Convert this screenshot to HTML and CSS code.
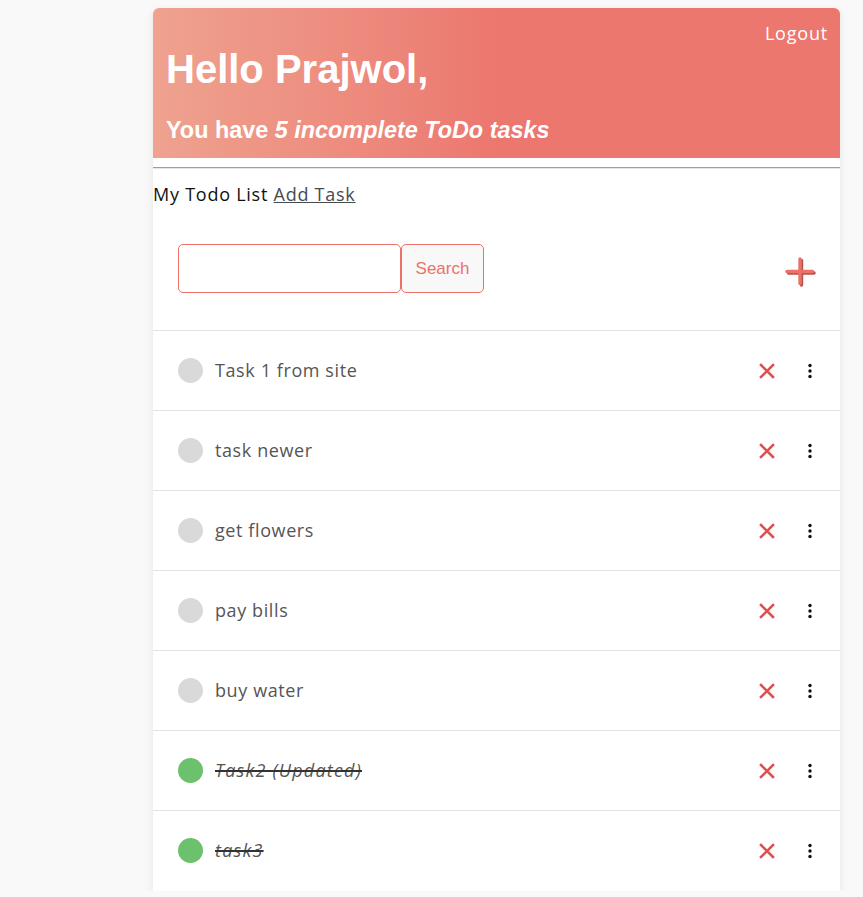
FILE: index.html
```html
<!DOCTYPE html>
<html lang="en">
<head>
<meta charset="utf-8">
<title>Todo</title>
<link rel="stylesheet" href="styles.css">
</head>
<body>
<div class="card">
  <header class="hero">
    <div class="hero-top"><a class="logout" href="#">Logout</a></div>
    <h1 class="hello">Hello Prajwol,</h1>
    <h2 class="summary">You have <em>5 incomplete ToDo tasks</em></h2>
  </header>
  <hr class="rule">
  <div class="crumbs">My Todo List <a href="#" class="add-link">Add Task</a></div>
  <div class="toolbar">
    <form class="search">
      <input class="search-input" type="text">
      <button class="search-btn" type="button">Search</button>
    </form>
    <button class="plus" type="button" aria-label="Add">
      <svg width="32" height="32" viewBox="0 0 32 32">
        <g stroke="#b5524c" stroke-width="3.4" stroke-linecap="round">
          <line x1="17.5" y1="4.5" x2="17.5" y2="29"/>
          <line x1="4.5" y1="17" x2="30" y2="17"/>
        </g>
        <g stroke="#ec7168" stroke-width="3.4" stroke-linecap="round">
          <line x1="16" y1="3" x2="16" y2="27.5"/>
          <line x1="3" y1="15.5" x2="28.5" y2="15.5"/>
        </g>
      </svg>
    </button>
  </div>
  <ul class="tasks">
    <li class="task"><span class="dot"></span><span class="label">Task 1 from site</span><span class="actions"><svg class="del" width="16" height="16" viewBox="0 0 16 16"><path d="M2 2L14 14M14 2L2 14" stroke="#d9534f" stroke-width="2.6" stroke-linecap="square"/></svg><svg class="more" width="4" height="16" viewBox="0 0 4 16"><circle cx="2" cy="2.5" r="1.7"/><circle cx="2" cy="8" r="1.7"/><circle cx="2" cy="13.5" r="1.7"/></svg></span></li>
    <li class="task"><span class="dot"></span><span class="label">task newer</span><span class="actions"><svg class="del" width="16" height="16" viewBox="0 0 16 16"><path d="M2 2L14 14M14 2L2 14" stroke="#d9534f" stroke-width="2.6" stroke-linecap="square"/></svg><svg class="more" width="4" height="16" viewBox="0 0 4 16"><circle cx="2" cy="2.5" r="1.7"/><circle cx="2" cy="8" r="1.7"/><circle cx="2" cy="13.5" r="1.7"/></svg></span></li>
    <li class="task"><span class="dot"></span><span class="label">get flowers</span><span class="actions"><svg class="del" width="16" height="16" viewBox="0 0 16 16"><path d="M2 2L14 14M14 2L2 14" stroke="#d9534f" stroke-width="2.6" stroke-linecap="square"/></svg><svg class="more" width="4" height="16" viewBox="0 0 4 16"><circle cx="2" cy="2.5" r="1.7"/><circle cx="2" cy="8" r="1.7"/><circle cx="2" cy="13.5" r="1.7"/></svg></span></li>
    <li class="task"><span class="dot"></span><span class="label">pay bills</span><span class="actions"><svg class="del" width="16" height="16" viewBox="0 0 16 16"><path d="M2 2L14 14M14 2L2 14" stroke="#d9534f" stroke-width="2.6" stroke-linecap="square"/></svg><svg class="more" width="4" height="16" viewBox="0 0 4 16"><circle cx="2" cy="2.5" r="1.7"/><circle cx="2" cy="8" r="1.7"/><circle cx="2" cy="13.5" r="1.7"/></svg></span></li>
    <li class="task"><span class="dot"></span><span class="label">buy water</span><span class="actions"><svg class="del" width="16" height="16" viewBox="0 0 16 16"><path d="M2 2L14 14M14 2L2 14" stroke="#d9534f" stroke-width="2.6" stroke-linecap="square"/></svg><svg class="more" width="4" height="16" viewBox="0 0 4 16"><circle cx="2" cy="2.5" r="1.7"/><circle cx="2" cy="8" r="1.7"/><circle cx="2" cy="13.5" r="1.7"/></svg></span></li>
    <li class="task done"><span class="dot"></span><span class="label">Task2 (Updated)</span><span class="actions"><svg class="del" width="16" height="16" viewBox="0 0 16 16"><path d="M2 2L14 14M14 2L2 14" stroke="#d9534f" stroke-width="2.6" stroke-linecap="square"/></svg><svg class="more" width="4" height="16" viewBox="0 0 4 16"><circle cx="2" cy="2.5" r="1.7"/><circle cx="2" cy="8" r="1.7"/><circle cx="2" cy="13.5" r="1.7"/></svg></span></li>
    <li class="task done"><span class="dot"></span><span class="label">task3</span><span class="actions"><svg class="del" width="16" height="16" viewBox="0 0 16 16"><path d="M2 2L14 14M14 2L2 14" stroke="#d9534f" stroke-width="2.6" stroke-linecap="square"/></svg><svg class="more" width="4" height="16" viewBox="0 0 4 16"><circle cx="2" cy="2.5" r="1.7"/><circle cx="2" cy="8" r="1.7"/><circle cx="2" cy="13.5" r="1.7"/></svg></span></li>
  </ul>
</div>
</body>
</html>
```
FILE: styles.css
```css
html, body {
  margin: 0;
  padding: 0;
}
body {
  background: #f9f9f9;
  padding: 8px 23px 0 153px;
  font-family: "Open Sans", "Liberation Sans", sans-serif;
  color: #212529;
}
.card {
  width: 687px;
  background: #fff;
  border-radius: 6px 6px 0 0;
  box-shadow: 0 3px 10px rgba(0, 0, 0, 0.09);
  padding-bottom: 1px;
}
.hero {
  height: 150px;
  box-sizing: border-box;
  padding: 12px 12px 0 13px;
  border-radius: 6px 6px 0 0;
  background: linear-gradient(to right, #efa28f 0%, #ed8a7d 30%, #ec776f 50%, #ec776f 100%);
  color: #fff;
  font-family: "Liberation Sans", Arial, sans-serif;
}
.hero-top {
  display: flex;
  justify-content: flex-end;
  height: 26px;
}
.logout {
  color: #fff;
  text-decoration: none;
  font-family: "Open Sans", sans-serif;
  font-size: 18px;
  letter-spacing: 0.8px;
  line-height: 26px;
}
.hello {
  margin: 0 0 0;
  font-size: 40px;
  line-height: 46px;
  font-weight: bold;
}
.summary {
  margin: 24px 0 0;
  font-size: 23.4px;
  line-height: 28px;
  font-weight: bold;
}
.summary em {
  font-style: italic;
}
.rule {
  margin: 9px 0 0;
  border: 0;
  border-top: 1px solid #9e9e9e;
  border-bottom: 1px solid #e6e6e6;
  height: 0;
}
.crumbs {
  margin-top: 13px;
  font-size: 18px;
  line-height: 25px;
  letter-spacing: 0.75px;
  color: #111;
}
.add-link {
  color: #454b52;
  text-decoration: underline;
}
.toolbar {
  display: flex;
  align-items: center;
  justify-content: space-between;
  padding: 37px 24px 37px 25px;
}
.search {
  display: flex;
  margin: 0;
}
.search-input {
  width: 223px;
  height: 49px;
  box-sizing: border-box;
  border: 1px solid #ec7168;
  border-radius: 5px;
  background: #fff;
  margin: 0;
}
.search-btn {
  width: 83px;
  height: 49px;
  box-sizing: border-box;
  border: 1px solid #ec7168;
  border-radius: 5px;
  background: #f8f8f8;
  color: #ec7168;
  font-family: "Liberation Sans", Arial, sans-serif;
  font-size: 17px;
  padding: 0;
  margin: 0;
}
.plus {
  border: 0;
  background: none;
  padding: 0;
  width: 32px;
  height: 32px;
  margin-top: 7px;
}
.plus svg {
  display: block;
}
.tasks {
  list-style: none;
  margin: 0;
  padding: 0;
}
.task {
  display: flex;
  align-items: center;
  height: 80px;
  box-sizing: border-box;
  border-top: 1px solid #e3e3e3;
  padding: 0 28px 0 25px;
}
.dot {
  width: 25px;
  height: 25px;
  border-radius: 50%;
  background: #d9d9d9;
  flex: none;
}
.done .dot {
  background: #6bc16c;
}
.label {
  margin-left: 12px;
  font-size: 18px;
  line-height: 24px;
  padding-bottom: 1px;
  letter-spacing: 0.6px;
  color: #555;
  flex: 1;
}
.done .label {
  font-style: italic;
  letter-spacing: 1.2px;
  text-decoration: line-through;
  text-decoration-color: #333;
  text-decoration-thickness: 2px;
}
.actions {
  display: flex;
  align-items: center;
  gap: 33px;
}
.actions svg {
  display: block;
}
.more {
  fill: #111;
}
```
